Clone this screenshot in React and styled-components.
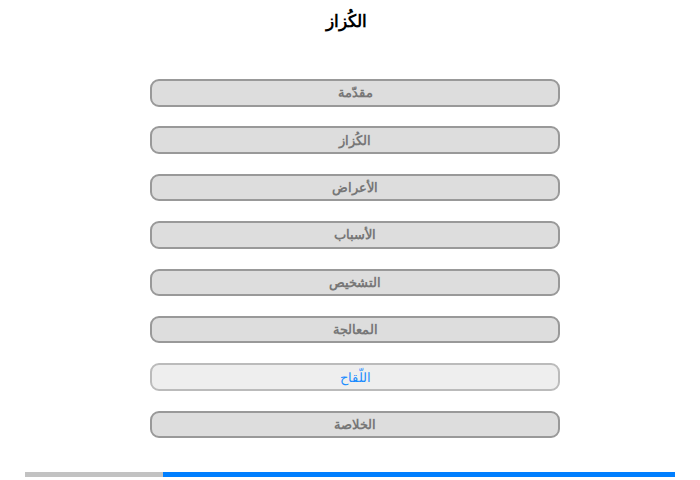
import styled, { createGlobalStyle } from 'styled-components';

const GlobalStyle = createGlobalStyle`
    html, body {
        margin: 0;
        padding: 0;
        background: #ffffff;
        font-family: 'Liberation Sans', Arial, sans-serif;
    }
`;

const Page = styled.div`
    width: 700px;
    height: 480px;
    display: flex;
    flex-direction: column;
    overflow: hidden;
`;

const Title = styled.h1`
    margin: 10px 0 0 0;
    height: 24px;
    font-size: 17px;
    line-height: 24px;
    font-weight: 700;
    color: #000;
    text-align: center;
    padding-right: 8px;
`;

const Menu = styled.div`
    display: grid;
    row-gap: 19.9px;
    grid-auto-rows: 27.5px;
    width: 410px;
    margin: 45px 0 0 150px;
`;

const MenuButton = styled.div`
    box-sizing: border-box;
    border: 2px solid ${(p) => (p.active ? '#bbbbbb' : '#999999')};
    border-radius: 9px;
    background: ${(p) => (p.active ? '#eeeeee' : '#dddddd')};
    color: ${(p) => (p.active ? '#1a8cff' : '#777777')};
    font-size: 13px;
    font-weight: ${(p) => (p.active ? 400 : 700)};
    display: flex;
    align-items: center;
    justify-content: center;
    direction: rtl;
`;

const Progress = styled.div`
    display: grid;
    grid-template-columns: 138px 1fr;
    height: 5px;
    margin: 34px 25px 0 25px;
    .done {
        background: #c2c2c2;
    }
    .rest {
        background: #007fff;
    }
`;

const items = ['مقدّمة', 'الكُزاز', 'الأعراض', 'الأسباب', 'التشخيص', 'المعالجة', 'اللّقاح', 'الخلاصة'];

function App() {
    return (
        <Page>
            <GlobalStyle />
            <Title dir="rtl">الكُزاز</Title>
            <Menu>
                {items.map((label, i) => (
                    <MenuButton key={label} active={i === 6 ? 1 : 0}>
                        {label}
                    </MenuButton>
                ))}
            </Menu>
            <Progress>
                <div className="done" />
                <div className="rest" />
            </Progress>
        </Page>
    );
}
export default App;
